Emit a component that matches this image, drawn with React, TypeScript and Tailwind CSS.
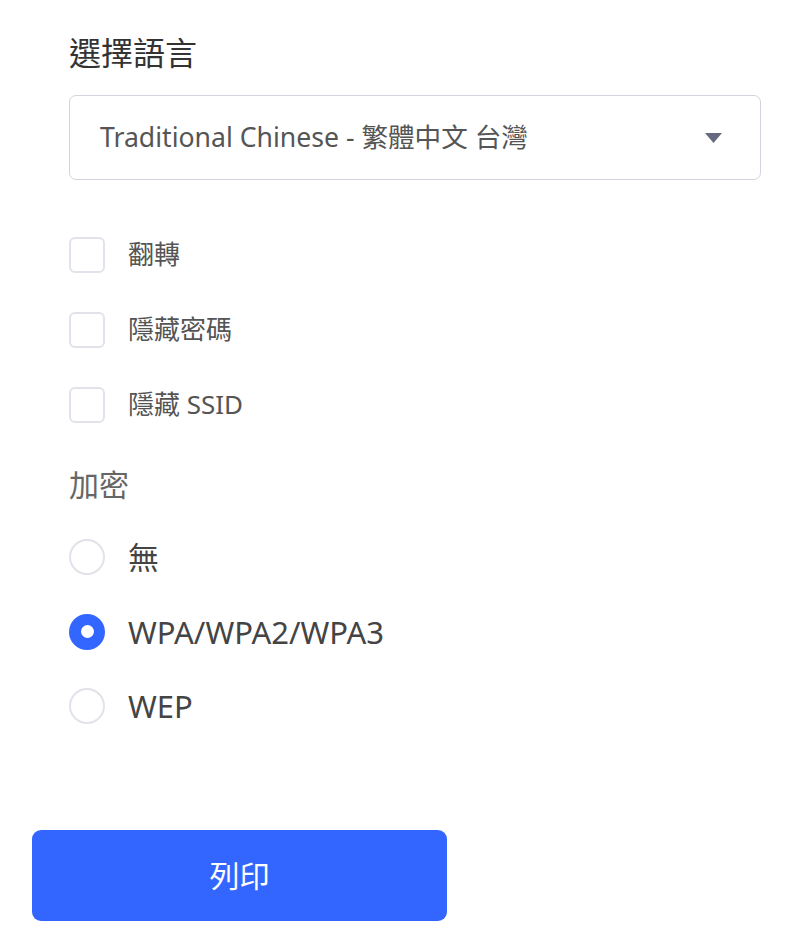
import { useState } from "react";

const font = {
  fontFamily: '"Noto Sans", "Noto Sans CJK TC", sans-serif',
};

function Checkbox({ label }: { label: string }) {
  const [checked, setChecked] = useState(false);
  return (
    <label className="flex h-[75px] cursor-pointer items-center">
      <span
        onClick={() => setChecked(!checked)}
        className={
          "flex h-[36px] w-[36px] items-center justify-center rounded-[6px] border-2 " +
          (checked ? "border-[#3366ff] bg-[#3366ff]" : "border-[#e2e2ea] bg-white")
        }
      >
        {checked && (
          <svg width="20" height="20" viewBox="0 0 20 20" fill="none">
            <path d="M4 10.5l4 4 8-9" stroke="white" strokeWidth="2.5" strokeLinecap="round" strokeLinejoin="round" />
          </svg>
        )}
      </span>
      <span className="ml-[23px] text-[26px] text-[#555]">{label}</span>
    </label>
  );
}

function Radio({
  label,
  selected,
  onSelect,
}: {
  label: string;
  selected: boolean;
  onSelect: () => void;
}) {
  return (
    <div onClick={onSelect} className="flex h-[74.5px] cursor-pointer items-center">
      {selected ? (
        <span className="flex h-[36px] w-[36px] items-center justify-center rounded-full bg-[#3366ff]">
          <span className="h-[13px] w-[13px] rounded-full bg-white" />
        </span>
      ) : (
        <span className="h-[36px] w-[36px] rounded-full border-2 border-[#e2e2ea] bg-white" />
      )}
      <span className="ml-[23px] text-[31px] text-[#444]">{label}</span>
    </div>
  );
}

export default function App() {
  const [enc, setEnc] = useState("WPA/WPA2/WPA3");

  return (
    <div className="min-h-[949px] w-[810px] bg-white pl-[32px]" style={font}>
      <div className="ml-[37px] w-[692px]">
        <h2 className="pt-[30px] text-[32px] leading-[45px] text-[#333]">選擇語言</h2>

        <div className="mt-[20px] flex h-[85px] items-center justify-between rounded-[7px] border border-[#d4d4de] pl-[30px] pr-[38px]">
          <span className="text-[26.6px] text-[#555]">Traditional Chinese - 繁體中文 台灣</span>
          <svg width="17" height="10" viewBox="0 0 17 10">
            <path d="M0 0h17L8.5 10z" fill="#666a80" />
          </svg>
        </div>

        <div className="mt-[37px]">
          <Checkbox label="翻轉" />
          <Checkbox label="隱藏密碼" />
          <Checkbox label="隱藏 SSID" />
        </div>

        <div className="mt-[20px] text-[30px] leading-[45px] text-[#666]">加密</div>

        <div className="mt-[13px]">
          {["無", "WPA/WPA2/WPA3", "WEP"].map((o) => (
            <Radio key={o} label={o} selected={enc === o} onSelect={() => setEnc(o)} />
          ))}
        </div>
      </div>

      <button className="mt-[86px] h-[91px] w-[415px] rounded-[9px] bg-[#3366ff] text-[30px] text-white">
        列印
      </button>
    </div>
  );
}
